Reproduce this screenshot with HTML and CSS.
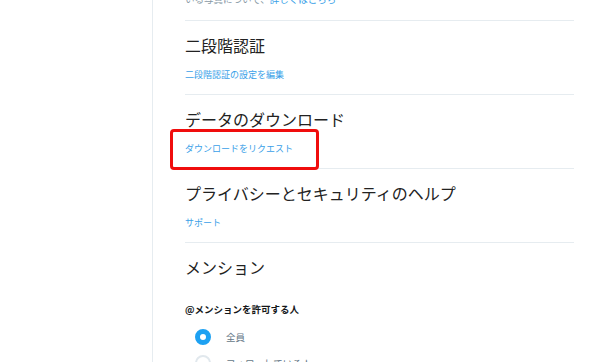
FILE: index.html
```html
<!DOCTYPE html>
<html lang="ja">

<head>
    <meta charset="UTF-8">
    <meta name="viewport" content="width=device-width, initial-scale=1.0">
    <title>プライバシーとセキュリティ</title>
    <link rel="stylesheet" href="styles.css">
</head>

<body>
    <div class="page">
        <div class="main">
            <p class="intro">いる写真について、<a href="#">詳しくはこちら</a></p>

            <div class="section">
                <h2>二段階認証</h2>
                <a class="link" href="#">二段階認証の設定を編集</a>
            </div>

            <div class="section">
                <h2>データのダウンロード</h2>
                <div class="mark">
                    <a class="link" href="#">ダウンロードをリクエスト</a>
                    <!-- 赤枠で囲む -->
                    <span class="highlight"></span>
                </div>
            </div>

            <div class="section">
                <h2>プライバシーとセキュリティのヘルプ</h2>
                <a class="link" href="#">サポート</a>
            </div>

            <div class="section mention">
                <h2>メンション</h2>
                <h3>@メンションを許可する人</h3>
                <label class="radio">
                    <input type="radio" name="mention" checked>
                    <span class="dot"></span>
                    全員
                </label>
                <label class="radio">
                    <input type="radio" name="mention">
                    <span class="dot"></span>
                    フォローしている人
                </label>
            </div>
        </div>
    </div>
</body>

</html>
```

FILE: styles.css
```css
body {
    margin: 0;
    background-color: #fff;
    font-family: "Noto Sans CJK JP", "Noto Sans", sans-serif;
    color: #14171a;
    overflow: hidden;
}

.page {
    display: flex;
    height: 362px;
}

.main {
    margin-left: 152px;
    border-left: 1px solid #e6ecf0;
    padding-left: 32px;
    width: 389px;
}

.intro {
    margin: -8px 0 0;
    height: 28px;
    line-height: 14px;
    font-size: 9.5px;
    color: #8899a6;
}

.intro a {
    color: #3a9fe8;
    text-decoration: none;
}

.section {
    border-top: 1px solid #e6ecf0;
    padding: 13px 0 12px;
    height: 48px;
}

h2 {
    margin: 0;
    font-size: 16px;
    font-weight: normal;
    line-height: 22px;
    color: #222;
}

.link {
    display: inline-block;
    margin-top: 12px;
    font-size: 9px;
    line-height: 14px;
    color: #3a9fe8;
    text-decoration: none;
}

.mark {
    position: relative;
}

.highlight {
    position: absolute;
    left: -15px;
    top: -1px;
    width: 143px;
    height: 35px;
    border: 3px solid #f00d0d;
    border-radius: 4px;
}

.mention {
    height: auto;
    padding-top: 13px;
}

h3 {
    margin: 24px 0 0;
    font-size: 9.5px;
    font-weight: bold;
    line-height: 14px;
    color: #14171a;
}

.radio {
    display: flex;
    align-items: center;
    gap: 15px;
    margin-left: 10px;
    height: 26px;
    font-size: 9.5px;
    color: #657786;
}

.radio:first-of-type {
    margin-top: 8px;
}

.radio input {
    display: none;
}

.dot {
    width: 12px;
    height: 12px;
    border-radius: 50%;
    border: 2px solid #e1e8ed;
    background-color: #fff;
}

.radio input:checked + .dot {
    border: 5px solid #1da1f2;
    width: 6px;
    height: 6px;
}
```
